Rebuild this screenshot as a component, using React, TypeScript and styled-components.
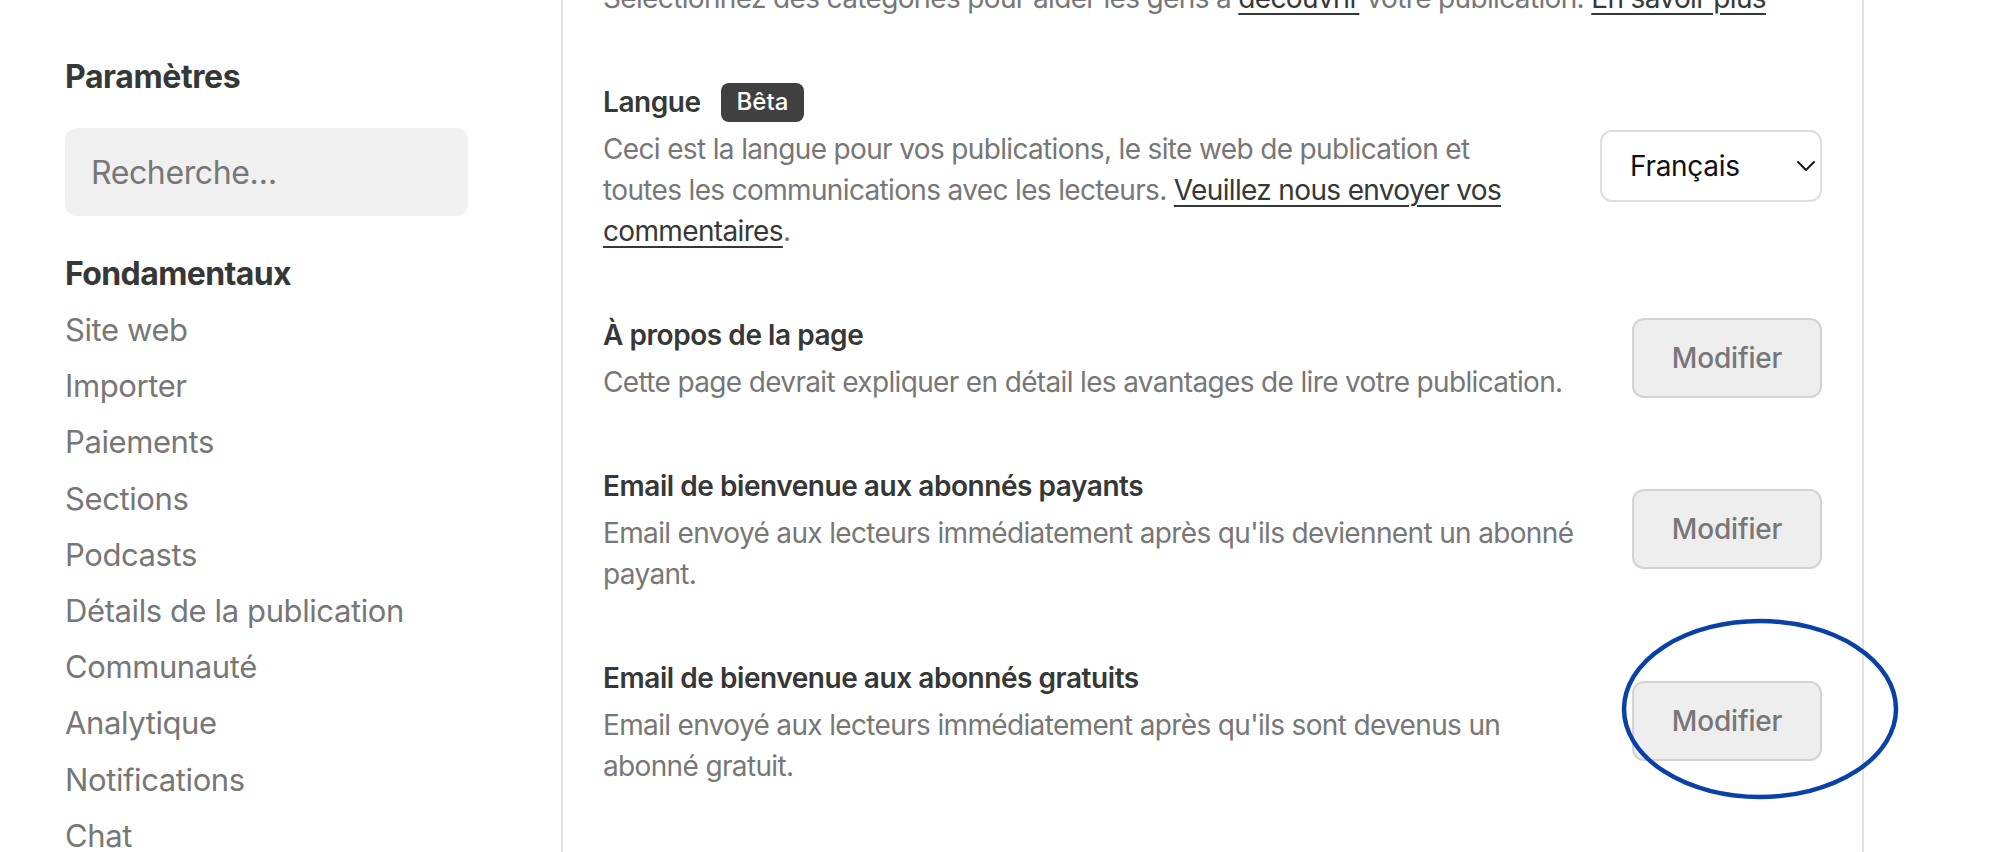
import styled, { createGlobalStyle } from 'styled-components';

const GlobalStyle = createGlobalStyle`
  html, body {
    margin: 0;
    padding: 0;
    background: #ffffff;
  }
  body {
    font-family: Inter, "Noto Sans", "Liberation Sans", sans-serif;
    -webkit-font-smoothing: antialiased;
  }
  #root {
    height: 852px;
    overflow: hidden;
  }
`;

const NAV_ITEMS = [
  'Site web',
  'Importer',
  'Paiements',
  'Sections',
  'Podcasts',
  'Détails de la publication',
  'Communauté',
  'Analytique',
  'Notifications',
  'Chat',
];

interface EditSetting {
  title: string;
  description: string;
}

const EDIT_SETTINGS: EditSetting[] = [
  {
    title: 'À propos de la page',
    description: 'Cette page devrait expliquer en détail les avantages de lire votre publication.',
  },
  {
    title: 'Email de bienvenue aux abonnés payants',
    description:
      "Email envoyé aux lecteurs immédiatement après qu'ils deviennent un abonné payant.",
  },
  {
    title: 'Email de bienvenue aux abonnés gratuits',
    description:
      "Email envoyé aux lecteurs immédiatement après qu'ils sont devenus un abonné gratuit.",
  },
];

export default function App() {
  return (
    <>
      <GlobalStyle />
      <Page>
        <Sidebar>
          <SidebarTitle>Paramètres</SidebarTitle>
          <SearchInput placeholder="Recherche…" />
          <NavGroupTitle>Fondamentaux</NavGroupTitle>
          {NAV_ITEMS.map((item) => (
            <NavItem key={item}>{item}</NavItem>
          ))}
        </Sidebar>

        <Main>
          <SettingRow first>
            <TextColumn>
              <Description>
                Sélectionnez des catégories pour aider les gens à <Link>découvrir</Link> votre
                publication. <Link>En savoir plus</Link>
              </Description>
            </TextColumn>
          </SettingRow>

          <SettingRow>
            <TextColumn>
              <Heading>
                Langue
                <Badge>Bêta</Badge>
              </Heading>
              <Description>
                Ceci est la langue pour vos publications, le site web de publication et toutes les
                communications avec les lecteurs. <Link>Veuillez nous envoyer vos commentaires</Link>.
              </Description>
            </TextColumn>
            <SelectBox>
              <span>Français</span>
              <svg width="20" height="12" viewBox="0 0 20 12" fill="none">
                <path
                  d="M2 2l8 8 8-8"
                  stroke="#1a1a1a"
                  strokeWidth="2"
                  strokeLinecap="round"
                  strokeLinejoin="round"
                />
              </svg>
            </SelectBox>
          </SettingRow>

          {EDIT_SETTINGS.map((setting) => (
            <SettingRow key={setting.title}>
              <TextColumn>
                <Heading>{setting.title}</Heading>
                <Description>{setting.description}</Description>
              </TextColumn>
              <EditButton>Modifier</EditButton>
            </SettingRow>
          ))}
        </Main>

        {/* hand-drawn highlight around the last button */}
        <Annotation width="284" height="186" viewBox="0 0 284 186">
          <ellipse cx="142" cy="93" rx="136" ry="88" fill="none" stroke="#0a41a8" strokeWidth="4.5" />
        </Annotation>
      </Page>
    </>
  );
}

const Page = styled.div`
  position: relative;
  display: flex;
  align-items: flex-start;
  height: 852px;
  overflow: hidden;
  background: #ffffff;
`;

const Sidebar = styled.aside`
  width: 561px;
  flex-shrink: 0;
  box-sizing: border-box;
  padding: 57px 0 0 65px;
`;

const SidebarTitle = styled.h2`
  margin: 0 0 31px;
  font-size: 32px;
  line-height: 40px;
  font-weight: 700;
  letter-spacing: -0.4px;
  color: #363737;
`;

const SearchInput = styled.input`
  display: block;
  width: 403px;
  height: 88px;
  box-sizing: border-box;
  padding: 0 26px;
  border: none;
  border-radius: 12px;
  background: #f0f0f0;
  font-family: inherit;
  font-size: 32px;
  letter-spacing: -0.4px;
  color: #363737;
  outline: none;

  &::placeholder {
    color: #777777;
  }
`;

const NavGroupTitle = styled.div`
  margin-top: 30px;
  font-size: 32px;
  line-height: 56px;
  font-weight: 700;
  letter-spacing: -0.6px;
  color: #363737;
`;

const NavItem = styled.div`
  font-size: 31px;
  line-height: 56.2px;
  letter-spacing: -0.4px;
  color: #777777;
`;

const Main = styled.main`
  width: 1303px;
  height: 852px;
  flex-shrink: 0;
  box-sizing: border-box;
  padding: 0 40px;
  border-left: 2px solid #e2e2e2;
  border-right: 2px solid #e2e2e2;
`;

const SettingRow = styled.section<{ first?: boolean }>`
  display: flex;
  align-items: center;
  gap: 48px;
  padding: 30px 0;
  margin-top: ${({ first }) => (first ? '-52px' : '0')};
`;

const TextColumn = styled.div`
  flex: 1;
  min-width: 0;
`;

const Heading = styled.h3`
  display: flex;
  align-items: center;
  gap: 20px;
  margin: 3px 0 7px;
  font-size: 28px;
  line-height: 40px;
  font-weight: 600;
  letter-spacing: -0.45px;
  color: #363737;
`;

const Badge = styled.span`
  display: inline-flex;
  align-items: center;
  height: 39px;
  padding: 0 16px;
  border-radius: 8px;
  background: #404040;
  color: #ffffff;
  font-size: 24px;
  font-weight: 500;
  letter-spacing: 0;
`;

const Description = styled.p`
  margin: 0;
  font-size: 28px;
  line-height: 41px;
  letter-spacing: -0.65px;
  color: #777777;
`;

const Link = styled.a`
  color: #363737;
  text-decoration: underline;
  text-decoration-thickness: 2px;
  text-underline-offset: 5px;
  cursor: pointer;
`;

const SelectBox = styled.div`
  width: 222px;
  height: 72px;
  flex-shrink: 0;
  box-sizing: border-box;
  display: flex;
  align-items: center;
  justify-content: space-between;
  padding: 0 4px 0 28px;
  border: 2px solid #dedede;
  border-radius: 12px;
  background: #ffffff;
  font-size: 28px;
  letter-spacing: -0.3px;
  color: #111111;
`;

const EditButton = styled.button`
  width: 190px;
  height: 80px;
  flex-shrink: 0;
  box-sizing: border-box;
  border: 2px solid #d3d3d3;
  border-radius: 12px;
  background: #eeeeee;
  font-family: inherit;
  font-size: 28px;
  font-weight: 500;
  letter-spacing: -0.2px;
  color: #777777;
  cursor: pointer;
`;

const Annotation = styled.svg`
  position: absolute;
  left: 1618px;
  top: 616px;
  pointer-events: none;
`;
